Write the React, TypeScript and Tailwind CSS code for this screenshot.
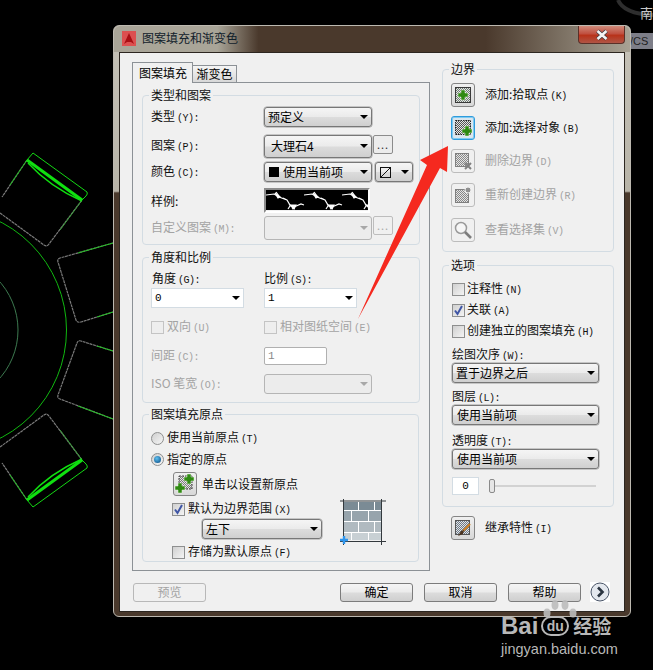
import type { ReactNode } from "react";

const SIDE_GRAD = "bg-[linear-gradient(180deg,#f5f5f5_0%,#ebebeb_48%,#dcdcdc_52%,#cfcfcf_100%)]";

function Label({ t, k, off }: { t: string; k?: string; off?: boolean }) {
  return (
    <span className={`whitespace-nowrap text-[12px] leading-[16px] ${off ? "text-[#a3a3a3]" : "text-[#111]"}`}>
      {t}
      {k && <span className="ml-[2px] font-['Liberation_Mono',monospace] text-[10px] tracking-[-0.5px]">{k}</span>}
    </span>
  );
}

function Caret({ off }: { off?: boolean }) {
  return (
    <span
      className={`h-0 w-0 border-x-[4px] border-t-[4px] border-x-transparent ${off ? "border-t-[#a8a8a8]" : "border-t-black"}`}
    />
  );
}

function Drop({ w, h = "h-[20px]", pl = "pl-[3px]", off, children }: { w: string; h?: string; pl?: string; off?: boolean; children?: ReactNode }) {
  if (off) {
    return (
      <div className={`${w} ${h} flex shrink-0 items-center justify-end rounded-[3px] border border-[#b5b5b5] bg-[#ececec] pr-[3px]`}>
        <Caret off />
      </div>
    );
  }
  return (
    <div className={`${w} ${h} ${pl} ${SIDE_GRAD} flex shrink-0 items-center justify-between rounded-[3px] border border-[#777] pr-[3px] shadow-[0_0_0_0.5px_#9a9a9a] text-[12px] text-black`}>
      <span className="flex items-center whitespace-nowrap">{children}</span>
      <Caret />
    </div>
  );
}

function Dots({ off }: { off?: boolean }) {
  return (
    <div className={`flex h-[19px] w-[20px] shrink-0 items-center justify-center rounded-[2px] border pb-[2px] text-[11px] tracking-[1px] ${off ? "border-[#bdbdbd] text-[#aaa]" : "border-[#8c8c8c] bg-[#ececec] text-[#333]"}`}>
      ...
    </div>
  );
}

function Check({ on, off }: { on?: boolean; off?: boolean }) {
  return (
    <span className={`relative block h-[13px] w-[13px] shrink-0 border ${off ? "border-[#c4c4c4] bg-[#eeeeee]" : "border-[#8e8f8f] bg-[linear-gradient(135deg,#d0d0d0,#f4f4f4)]"}`}>
      {on && (
        <svg viewBox="0 0 13 13" className="absolute -left-px -top-px h-[13px] w-[13px]">
          <path d="M3 6.5 L5.5 10 L10 2" fill="none" stroke="#3f55a5" strokeWidth="2" />
        </svg>
      )}
    </span>
  );
}

function Radio({ on }: { on?: boolean }) {
  return (
    <span className="flex h-[13px] w-[13px] shrink-0 items-center justify-center rounded-full border border-[#8e8f8f] bg-[linear-gradient(135deg,#cfcfcf,#f6f6f6)]">
      {on && <span className="h-[7px] w-[7px] rounded-full bg-[radial-gradient(circle_at_40%_35%,#5fc0f0,#06467f)]" />}
    </span>
  );
}

function Group({ title, w = "w-[278px]", h, pl = "pl-[8px]", mt, children }: { title: string; w?: string; h: string; pl?: string; mt: string; children: ReactNode }) {
  return (
    <div className={`relative ${w} ${h} ${mt} ${pl} rounded-[4px] border border-[#d3dce3]`}>
      <div className="absolute -top-[9px] left-[6px] bg-[#f0f0f0] px-[2px]">
        <Label t={title} />
      </div>
      {children}
    </div>
  );
}

function Hatch({ id, c = "#555" }: { id: string; c?: string }) {
  return (
    <defs>
      <pattern id={id} width="2" height="2" patternUnits="userSpaceOnUse">
        <rect width="2" height="2" fill="#e4e4e4" />
        <rect width="1" height="1" fill={c} />
        <rect x="1" y="1" width="1" height="1" fill={c} />
      </pattern>
    </defs>
  );
}

function Plus({ x, y, c = "#2f8a12" }: { x: number; y: number; c?: string }) {
  return <path d={`M${x - 2} ${y - 5}h4v3h3v4h-3v3h-4v-3h-3v-4h3z`} fill={c} stroke="#eaf5e0" strokeWidth="0.5" />;
}

function IconBtn({ state, children }: { state?: "off" | "focus"; children: ReactNode }) {
  const look =
    state === "off"
      ? "border-[#bcbcbc] bg-[#f0f0f0]"
      : state === "focus"
        ? "border-[#2f9bdc] bg-[#dbe6ee] shadow-[inset_0_0_0_1px_#7fcbf2]"
        : "border-[#858585] bg-[linear-gradient(180deg,#f0f0f0,#d8d8d8)]";
  return (
    <div className={`flex h-[24px] w-[24px] shrink-0 items-center justify-center rounded-[3px] border ${look}`}>
      <svg viewBox="0 0 22 22" className="h-[22px] w-[22px]">
        {children}
      </svg>
    </div>
  );
}

function BorderRow({ mt, label, hot, state, children }: { mt: string; label: string; hot: string; state?: "off" | "focus"; children: ReactNode }) {
  return (
    <div className={`flex h-[24px] items-center ${mt}`}>
      <IconBtn state={state}>{children}</IconBtn>
      <span className="ml-[10px]">
        <Label t={label} k={hot} off={state === "off"} />
      </span>
    </div>
  );
}

function Btn({ label, off }: { label: string; off?: boolean }) {
  return (
    <div className={`flex h-[19px] w-[73px] items-center justify-center rounded-[3px] border text-[12px] ${off ? "border-[#b8b8b8] bg-[#f0f0f0] text-[#a3a3a3]" : `border-[#7c7c7c] ${SIDE_GRAD} text-black`}`}>
      {label}
    </div>
  );
}

function Backdrop() {
  const block =
    "M27 160 L2 197 M0 213 L44 245 Q47 247 49 244 L82 200";
  return (
    <svg viewBox="0 0 653 670" className="absolute inset-0 h-[670px] w-[653px]" fill="none">
      <circle cx="-55" cy="330" r="121.5" stroke="#10b810" strokeWidth="1" />
      <circle cx="-55" cy="330" r="73" stroke="#3d7a50" strokeWidth="1" />
      {[0, 1].map((m) => (
        <g key={m} transform={m ? "matrix(1 0 0 -1 0 660)" : undefined}>
          <path d={block} stroke="#7a7a7a" strokeWidth="1.2" strokeDasharray="3 0.6" />
          <path d="M27 160 L10 185" stroke="#1fc01f" strokeWidth="1" />
          <path d="M82 200 L60 230" stroke="#38a038" strokeWidth="1" />
          <path d="M33 153 L87 192 Q88 194 86 196 L82 200" stroke="#14d814" strokeWidth="1" />
          <path d="M27 160 L33 153" stroke="#14d814" strokeWidth="1" />
          <path d="M27 160 L82 200" stroke="#10e010" strokeWidth="3" />
          <path d="M28 163 Q50 187 82 201" stroke="#10e010" strokeWidth="1.4" />
        </g>
      ))}
      <path d="M113 243 L60 258 Q57 259 58 262 L76 320 Q77 323 81 322 L113 312" stroke="#7a7a7a" strokeWidth="1.2" strokeDasharray="3 0.6" />
      <path d="M113 243 L78 253 M113 312 L97 317" stroke="#22c022" strokeWidth="1" />
      <path d="M113 351 L81 341 Q78 340 77 343 L58 395 Q57 398 60 399 L113 419" stroke="#7a7a7a" strokeWidth="1.2" strokeDasharray="3 0.6" />
      <path d="M113 351 L97 346 M113 419 L78 406" stroke="#22c022" strokeWidth="1" />
      <path d="M618 0 Q624 14 653 15" stroke="#2e2e2e" strokeWidth="4" />
    </svg>
  );
}

function Bricks() {
  const rows = [
    { y: 3, h: 8, c: "#7b8b95", xs: [4, 19, 35], es: [18, 34, 41] },
    { y: 12, h: 10, c: "#97a4ac", xs: [4, 12, 29], es: [11, 28, 41] },
    { y: 23, h: 10, c: "#b0bac0", xs: [4, 19, 35], es: [18, 34, 41] },
    { y: 34, h: 7, c: "#c8d0d4", xs: [4, 12, 29], es: [11, 28, 41] },
  ];
  return (
    <svg viewBox="0 0 46 46" className="h-[46px] w-[46px]">
      <rect x="4" y="3" width="37" height="38" fill="#fff" />
      {rows.map((r) =>
        r.xs.map((x, i) => <rect key={`${r.y}-${x}`} x={x} y={r.y} width={r.es[i] - x} height={r.h} fill={r.c} />),
      )}
      <path d="M3.5 0V46M41.5 0V46M0 2H46M0 42.5H46" stroke="#33393d" strokeWidth="1" />
      <path d="M4 37v8M0 41h8" stroke="#2f96ee" strokeWidth="2.4" />
    </svg>
  );
}

function Marble() {
  return (
    <svg viewBox="0 0 102 20" className="h-[20px] w-[102px]">
      <rect width="102" height="20" fill="#000" />
      {[0, 38, 76].map((x) => (
        <g key={x} transform={`translate(${x} 0)`} fill="none" stroke="#fff" strokeWidth="1.2">
          <path d="M0 5 L8 4 L13 7 L21 10 L24 15 L28 18 L26 19 M10 2 L13 6 M21 10 L17 8 M28 17 L35 14 L38 15 M24 16 L22 19" />
          <path d="M9 3 L14 7 L12 8 Z" fill="#fff" />
          <path d="M24 15 L30 15 L28 19 Z" fill="#fff" />
        </g>
      ))}
    </svg>
  );
}

function Watermark() {
  return (
    <div className="absolute left-[501px] top-[598px] w-[120px] text-[#b8b8b8]">
      <svg viewBox="0 0 40 22" className="ml-[40px] h-[22px] w-[40px]">
        <g fill="#bcbcbc" opacity="0.9">
          <ellipse cx="6" cy="15" rx="3.5" ry="4.5" />
          <ellipse cx="14" cy="7" rx="3.5" ry="5" />
          <ellipse cx="24" cy="7" rx="3.5" ry="5" />
          <ellipse cx="32" cy="15" rx="3.5" ry="4.5" />
        </g>
      </svg>
      <div className="-mt-[4px] flex h-[20px] items-center">
        <span className="font-['Liberation_Sans',sans-serif] text-[24px] leading-[20px] font-bold">Bai</span>
        <span className="ml-[3px] flex h-[20px] w-[28px] items-center justify-center rounded-[10px] border-[2px] border-[#b8b8b8] font-['Liberation_Sans',sans-serif] text-[14px] font-bold leading-none">du</span>
        <span className="ml-[4px] text-[19px] leading-[20px] font-bold">经验</span>
      </div>
      <div className="mt-[5px] font-['Liberation_Sans',sans-serif] text-[14.5px] leading-[16px] whitespace-nowrap">jingyan.baidu.com</div>
    </div>
  );
}

export default function App() {
  return (
    <div className="relative h-[670px] w-[653px] overflow-hidden bg-black font-['Noto_Sans_CJK_SC',sans-serif] text-[12px] leading-[16px]">
      <Backdrop />
      <span className="absolute left-[640px] top-[5px] text-[13px] text-[#c8c8c8]">南</span>
      <div className="absolute left-[630px] top-[33px] flex h-[16px] w-[23px] items-center bg-[#7d7e88] font-['Liberation_Sans',sans-serif] text-[11px] text-[#222]">/CS</div>

      {/* dialog */}
      <div className="absolute left-[113px] top-[25px] h-[592px] w-[518px] rounded-[6px] border border-[#bdb9b0] bg-[linear-gradient(180deg,#c6c2b8_0%,#b8b4a8_28%,#4a392c_28.3%,#4a392c_100%)]">
        <div className="flex h-[26px] rounded-t-[6px] bg-[linear-gradient(90deg,#a9a598_0%,#a9a598_20%,#4a392c_28%,#4a392c_72%,#a8a294_100%)]">
          <div className="ml-[8px] mt-[5px] flex h-[15px] w-[14px] items-center justify-center bg-[#dc5050]">
            <svg viewBox="0 0 14 15" className="h-[15px] w-[14px]">
              <path d="M7 2 L12 13 L9 11 H5 L2 13 Z" fill="#a80f14" />
            </svg>
          </div>
          <span className="ml-[6px] mt-[4px] text-[12px] leading-[16px] text-[#10202a]">图案填充和渐变色</span>
          <div className="ml-auto mr-[5px] flex h-[18px] w-[47px] items-center justify-center rounded-b-[4px] border border-t-0 border-[#5a3028] bg-[linear-gradient(180deg,#cf8a7a_0%,#c05040_45%,#b8321a_55%,#b05545_100%)]">
            <svg viewBox="0 0 14 12" className="h-[12px] w-[14px]">
              <path d="M2.5 2 L11.5 10 M11.5 2 L2.5 10" stroke="#3a3a40" strokeWidth="4" />
              <path d="M2.5 2 L11.5 10 M11.5 2 L2.5 10" stroke="#f4f4f4" strokeWidth="2.6" />
            </svg>
          </div>
        </div>

        {/* client area */}
        <div className="mx-[5px] h-[560px] border border-[#2c2620] bg-[#f0f0f0]">
          <div className="flex pl-[12px] pt-[9px]">
            {/* left column */}
            <div className="w-[298px]">
              <div className="flex h-[20px] items-end">
                <div className="relative z-10 -mb-px flex h-[21px] w-[61px] items-center justify-center border border-b-0 border-[#8c9196] bg-[#f0f0f0] pl-[1px] text-[12px] text-black">图案填充</div>
                <div className="flex h-[17px] w-[44px] items-center justify-center border border-b-0 border-l-0 border-[#8c9196] bg-[linear-gradient(180deg,#f5f5f5,#d8d8d8)] text-[12px] text-black">渐变色</div>
              </div>
              <div className="h-[489px] border border-[#8c9196] pl-[9px] pt-[12px]">
                <Group title="类型和图案" mt="mt-0" h="h-[150px]">
                  <div className="flex h-[20px] mt-[11px] items-center">
                    <div className="w-[113px]"><Label t="类型" k="(Y):" /></div>
                    <Drop w="w-[108px]">预定义</Drop>
                  </div>
                  <div className="mt-[7px] flex h-[24px] items-center">
                    <div className="w-[113px]"><Label t="图案" k="(P):" /></div>
                    <Drop w="w-[108px]" h="h-[23px]" pl="pl-[6px]">大理石4</Drop>
                    <div className="ml-[1px] -mt-[3px]"><Dots /></div>
                  </div>
                  <div className="mt-[4px] flex h-[20px] items-center">
                    <div className="w-[113px]"><Label t="颜色" k="(C):" /></div>
                    <Drop w="w-[108px]" pl="pl-[4px]">
                      <span className="mr-[4px] h-[10px] w-[10px] bg-black" />
                      使用当前项
                    </Drop>
                    <div className="ml-[3px]">
                      <Drop w="w-[38px]" pl="pl-[4px]">
                        <svg viewBox="0 0 11 11" className="h-[11px] w-[11px]">
                          <rect x="0.5" y="0.5" width="10" height="10" fill="none" stroke="#111" />
                          <path d="M0.5 10.5 L10.5 0.5" stroke="#111" />
                        </svg>
                      </Drop>
                    </div>
                  </div>
                  <div className="mt-[6px] flex h-[25px] items-center">
                    <div className="w-[113px]"><Label t="样例:" /></div>
                    <div className="h-[25px] w-[106px] border-[2px] border-[#8c8c8c] border-b-white border-r-white">
                      <Marble />
                    </div>
                  </div>
                  <div className="mt-[3px] flex h-[24px]">
                    <div className="flex w-[113px] items-center"><Label t="自定义图案" k="(M):" off /></div>
                    <Drop w="w-[108px]" h="h-[24px]" off />
                    <div className="ml-[1px]"><Dots off /></div>
                  </div>
                </Group>

                <Group title="角度和比例" mt="mt-[12px]" h="h-[146px]">
                  <div className="mt-[12px] flex h-[16px]">
                    <div className="w-[113px] pl-[1px]"><Label t="角度" k="(G):" /></div>
                    <Label t="比例" k="(S):" />
                  </div>
                  <div className="mt-[2px] flex h-[20px]">
                    <div className="flex h-[20px] w-[93px] items-center justify-between border border-[#d3dce3] bg-white px-[3px] font-['Liberation_Mono',monospace] text-[11px] text-black">0<Caret /></div>
                    <div className="ml-[20px] flex h-[20px] w-[93px] items-center justify-between border border-[#d3dce3] bg-white px-[3px] font-['Liberation_Mono',monospace] text-[11px] text-black">1<Caret /></div>
                  </div>
                  <div className="mt-[12px] flex h-[14px] items-center">
                    <div className="flex w-[113px] items-center gap-[3px]"><Check off /><Label t="双向" k="(U)" off /></div>
                    <div className="flex items-center gap-[3px]"><Check off /><Label t="相对图纸空间" k="(E)" off /></div>
                  </div>
                  <div className="mt-[13px] flex h-[18px] items-center">
                    <div className="w-[113px]"><Label t="间距" k="(C):" off /></div>
                    <div className="flex h-[18px] w-[63px] items-center rounded-[2px] border border-[#b0b0b0] bg-white px-[3px] font-['Liberation_Mono',monospace] text-[11px] text-[#888]">1</div>
                  </div>
                  <div className="mt-[9px] flex h-[20px] items-center">
                    <div className="w-[113px]"><Label t="ISO 笔宽" k="(O):" off /></div>
                    <Drop w="w-[108px]" off />
                  </div>
                </Group>

                <Group title="图案填充原点" w="w-[277px]" mt="mt-[11px]" h="h-[148px]">
                  <div className="mt-[16px] flex h-[14px] items-center gap-[3px]"><Radio /><Label t="使用当前原点" k="(T)" /></div>
                  <div className="mt-[7px] flex h-[14px] items-center gap-[3px]"><Radio on /><Label t="指定的原点" /></div>
                  <div className="ml-[22px] mt-[5px] flex h-[25px] items-center">
                    <IconBtn>
                      <Hatch id="h-pick" c="#777" />
                      <rect x="5" y="3" width="13" height="13" fill="url(#h-pick)" stroke="#444" strokeDasharray="2 1" />
                      <Plus x={15} y={6} />
                      <Plus x={6} y={15} />
                    </IconBtn>
                    <span className="ml-[5px]"><Label t="单击以设置新原点" /></span>
                  </div>
                  <div className="flex h-[52px]">
                    <div className="w-[189px] pl-[21px]">
                      <div className="mt-[6px] flex h-[14px] items-center gap-[3px]"><Check on /><Label t="默认为边界范围" k="(X)" /></div>
                      <div className="ml-[30px] mt-[3px]">
                        <Drop w="w-[120px]">左下</Drop>
                      </div>
                      <div className="mt-[6px] flex h-[14px] items-center gap-[3px]"><Check /><Label t="存储为默认原点" k="(F)" /></div>
                    </div>
                    <div className="mt-[3px]"><Bricks /></div>
                  </div>
                </Group>
              </div>
            </div>

            {/* right column */}
            <div className="ml-[12px] mt-[7px] w-[172px]">
              <Group title="边界" w="w-[172px]" mt="mt-0" h="h-[183px]">
                <BorderRow mt="mt-[13px]" label="添加:拾取点" hot="(K)">
                  <Hatch id="h-a" c="#6d7a70" />
                  <rect x="3.5" y="3.5" width="15" height="15" fill="url(#h-a)" stroke="#3a3a3a" />
                  <Plus x={11} y={11} />
                </BorderRow>
                <BorderRow mt="mt-[9px]" label="添加:选择对象" hot="(B)" state="focus">
                  <Hatch id="h-b" c="#555" />
                  <rect x="3.5" y="3.5" width="15" height="14" fill="url(#h-b)" stroke="#222" strokeDasharray="1.5 1" />
                  <Plus x={15} y={14} />
                </BorderRow>
                <BorderRow mt="mt-[9px]" label="删除边界" hot="(D)" state="off">
                  <Hatch id="h-c" c="#888" />
                  <rect x="3.5" y="3.5" width="13" height="13" fill="url(#h-c)" stroke="#808080" />
                  <path d="M13 13 L19 19 M19 13 L13 19" stroke="#808080" strokeWidth="2" />
                </BorderRow>
                <BorderRow mt="mt-[10px]" label="重新创建边界" hot="(R)" state="off">
                  <Hatch id="h-d" c="#888" />
                  <rect x="3.5" y="5.5" width="13" height="13" fill="url(#h-d)" stroke="#808080" />
                  <circle cx="16" cy="6" r="3" fill="#909090" stroke="#f0f0f0" />
                </BorderRow>
                <BorderRow mt="mt-[11px]" label="查看选择集" hot="(V)" state="off">
                  <circle cx="9" cy="9" r="5.5" fill="#f6f6f6" stroke="#9a9a9a" strokeWidth="1.5" />
                  <path d="M13 13 L19 19" stroke="#7d7d7d" strokeWidth="2.6" />
                </BorderRow>
              </Group>

              <Group title="选项" w="w-[172px]" pl="pl-[9px]" mt="mt-[13px]" h="h-[242px]">
                <div className="mt-[16px] flex h-[14px] items-center gap-[2px]"><Check /><Label t="注释性" k="(N)" /></div>
                <div className="mt-[7px] flex h-[14px] items-center gap-[2px]"><Check on /><Label t="关联" k="(A)" /></div>
                <div className="mt-[7px] flex h-[14px] items-center gap-[2px]"><Check /><Label t="创建独立的图案填充" k="(H)" /></div>
                <div className="mt-[8px] h-[16px]"><Label t="绘图次序" k="(W):" /></div>
                <div className="mt-px"><Drop w="w-[147px]">置于边界之后</Drop></div>
                <div className="mt-[5px] h-[16px]"><Label t="图层" k="(L):" /></div>
                <div className="mt-px"><Drop w="w-[147px]" pl="pl-[4px]">使用当前项</Drop></div>
                <div className="mt-[7px] h-[16px]"><Label t="透明度" k="(T):" /></div>
                <div className="mt-px"><Drop w="w-[147px]" pl="pl-[4px]">使用当前项</Drop></div>
                <div className="mt-[8px] flex h-[18px] items-center">
                  <div className="flex h-[18px] w-[27px] items-center justify-center border border-[#d3dce3] bg-white font-['Liberation_Mono',monospace] text-[11px] text-black">0</div>
                  <div className="relative ml-[10px] h-[2px] w-[107px] bg-[#d2d2d2]">
                    <div className="absolute -top-[6px] left-0 h-[14px] w-[6px] rounded-[2px] border border-[#8a8a8a] bg-[#e6e6e6]" />
                  </div>
                </div>
              </Group>

              <div className="mt-[9px] pl-[9px]">
                <div className="flex h-[24px] items-center">
                  <IconBtn>
                    <Hatch id="h-e" c="#6b7a8a" />
                    <rect x="3.5" y="3.5" width="14" height="14" fill="url(#h-e)" stroke="#555" />
                    <path d="M18 7 L11 14" stroke="#c87a1e" strokeWidth="2" />
                    <path d="M12 13 L9 14 L6 19 L11 17 Z" fill="#4a3320" />
                  </IconBtn>
                  <span className="ml-[10px]"><Label t="继承特性" k="(I)" /></span>
                </div>
              </div>
            </div>
          </div>

          {/* bottom buttons */}
          <div className="mt-[11px] flex items-center pl-[13px]">
            <Btn label="预览" off />
            <div className="ml-[134px]"><Btn label="确定" /></div>
            <div className="ml-[11px]"><Btn label="取消" /></div>
            <div className="ml-[11px]"><Btn label="帮助" /></div>
            <div className="ml-[9px] flex h-[20px] w-[20px] items-center justify-center bg-white">
              <svg viewBox="0 0 20 20" className="h-[20px] w-[20px]">
                <circle cx="10" cy="10" r="9" fill="#e4e8ee" stroke="#4a5568" />
                <path d="M8 5.5 L12.5 10 L8 14.5" fill="none" stroke="#2a3440" strokeWidth="2.6" />
              </svg>
            </div>
          </div>
        </div>
      </div>

      <Watermark />

      {/* red arrow drawn over the dialog */}
      <svg viewBox="0 0 653 670" className="pointer-events-none absolute inset-0 h-[670px] w-[653px]">
        <path d="M448 146 L447 172 L440 168 L358 319 L427 165 L420 160 Z" fill="#f5291f" />
      </svg>
    </div>
  );
}
